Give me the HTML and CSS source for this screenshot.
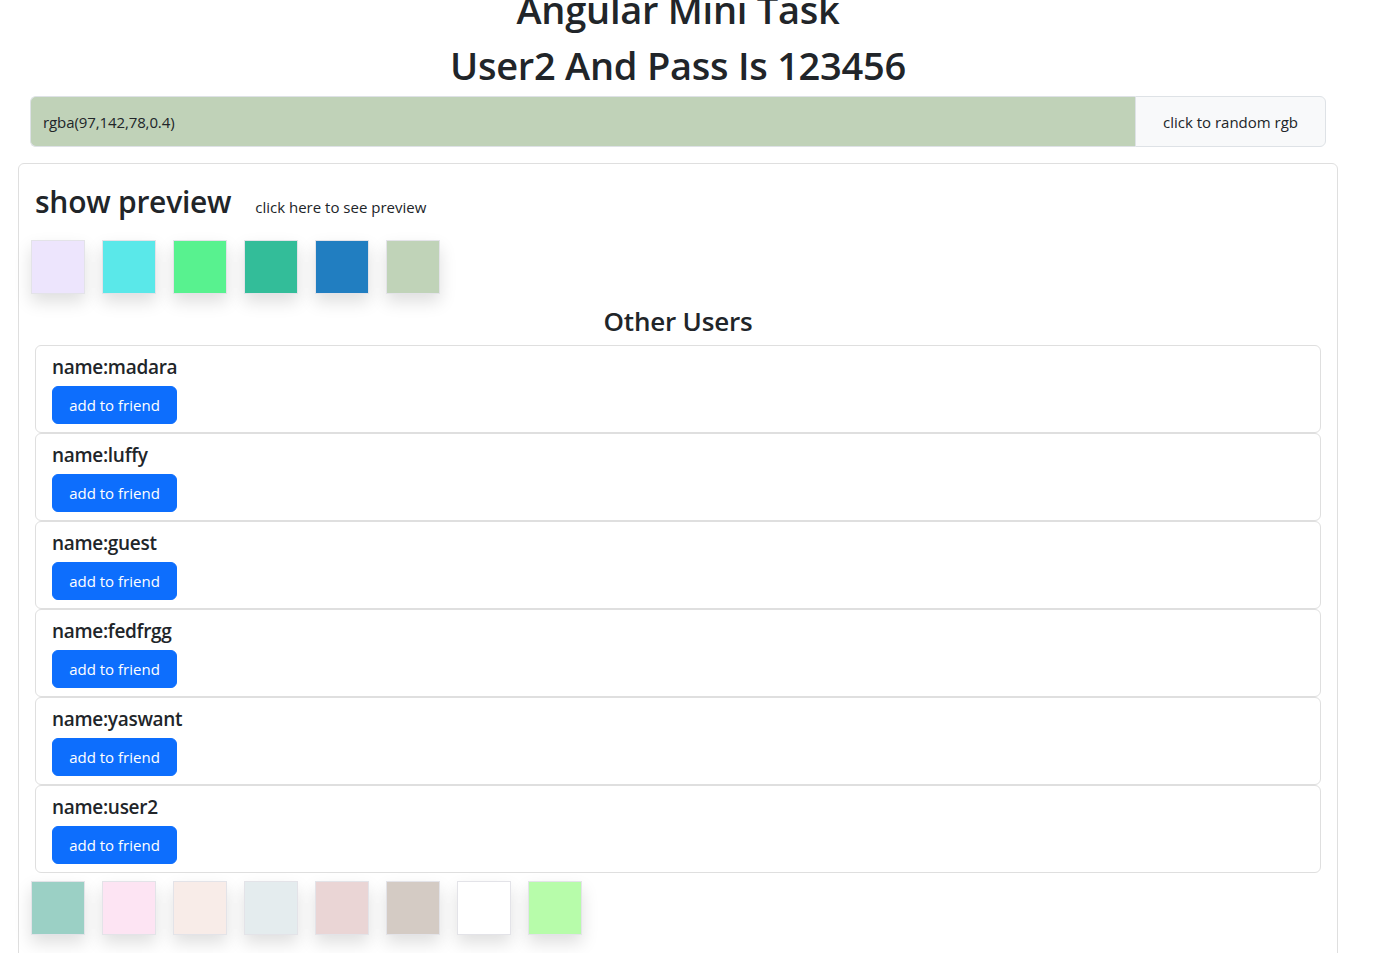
FILE: index.html
```html
<!DOCTYPE html>
<html lang="en">
<head>
<meta charset="utf-8">
<title>Angular Mini Task</title>
<link rel="stylesheet" href="styles.css">
</head>
<body>
<div class="page">
  <h1 class="title title-first">Angular Mini Task</h1>
  <h1 class="title">User2 And Pass Is 123456</h1>
  <div class="input-group">
    <div class="color-input">rgba(97,142,78,0.4)</div>
    <button class="random-btn">click to random rgb</button>
  </div>
  <div class="main-card">
    <div class="preview-head">
      <h2 class="preview-title">show preview</h2>
      <span class="preview-link">click here to see preview</span>
    </div>
    <div class="swatches swatches-top">
      <div class="swatch" style="background:#ede5fd"></div>
      <div class="swatch" style="background:#5ae8e9"></div>
      <div class="swatch" style="background:#58f28f"></div>
      <div class="swatch" style="background:#33bd99"></div>
      <div class="swatch" style="background:#217ec1"></div>
      <div class="swatch" style="background:#c0d3b8"></div>
    </div>
    <h3 class="users-title">Other Users</h3>
    <div class="users">
      <div class="user-card"><h5 class="user-name">name:madara</h5><button class="btn-primary">add to friend</button></div>
      <div class="user-card"><h5 class="user-name">name:luffy</h5><button class="btn-primary">add to friend</button></div>
      <div class="user-card"><h5 class="user-name">name:guest</h5><button class="btn-primary">add to friend</button></div>
      <div class="user-card"><h5 class="user-name">name:fedfrgg</h5><button class="btn-primary">add to friend</button></div>
      <div class="user-card"><h5 class="user-name">name:yaswant</h5><button class="btn-primary">add to friend</button></div>
      <div class="user-card"><h5 class="user-name">name:user2</h5><button class="btn-primary">add to friend</button></div>
    </div>
    <div class="swatches swatches-bottom">
      <div class="swatch" style="background:#9bd0c5"></div>
      <div class="swatch" style="background:#fde4f3"></div>
      <div class="swatch" style="background:#f8ece8"></div>
      <div class="swatch" style="background:#e4ecee"></div>
      <div class="swatch" style="background:#ead5d5"></div>
      <div class="swatch" style="background:#d4cbc4"></div>
      <div class="swatch" style="background:#ffffff"></div>
      <div class="swatch" style="background:#b7fcaa"></div>
    </div>
  </div>
</div>
</body>
</html>
```
FILE: styles.css
```css
html, body {
  margin: 0;
  padding: 0;
  background: #fff;
}
body {
  font-family: "Open Sans", "Noto Sans", "Liberation Sans", sans-serif;
  color: #212529;
  overflow: hidden;
}
.page {
  width: 1320px;
  margin-left: 18px;
}
.title {
  margin: 0 0 8px;
  font-size: 38px;
  font-weight: 600;
  line-height: 48px;
  letter-spacing: -0.25px;
  text-align: center;
}
.title-first {
  margin-top: -15px;
}
.input-group {
  display: flex;
  margin: -1px 12px 0;
  height: 51px;
}
.color-input {
  flex: 1;
  display: flex;
  align-items: center;
  padding: 0 12px;
  background: rgba(97, 142, 78, 0.4);
  border: 1px solid #dee2e6;
  border-right: none;
  border-radius: 6px 0 0 6px;
  font-size: 15px;
  letter-spacing: -0.1px;
}
.random-btn {
  width: 191px;
  background: #f8f9fa;
  border: 1px solid #dee2e6;
  border-radius: 0 6px 6px 0;
  font-family: inherit;
  font-size: 15px;
  color: #212529;
  padding: 0;
}
.main-card {
  margin-top: 16px;
  border: 1px solid #dfdfdf;
  border-radius: 6px 6px 0 0;
  padding: 18px 16px 40px;
}
.preview-head {
  display: flex;
  align-items: baseline;
  gap: 24px;
}
.preview-title {
  margin: 0;
  font-size: 30px;
  font-weight: 600;
  line-height: 40px;
  letter-spacing: -0.25px;
}
.preview-link {
  font-size: 15px;
}
.swatches {
  display: flex;
  gap: 17px;
  margin-left: -4px;
}
.swatches-top {
  margin-top: 18px;
}
.swatches-bottom {
  margin-top: 8px;
}
.swatch {
  width: 52px;
  height: 52px;
  border: 1px solid #e3e3e8;
  box-shadow: 0 8px 16px rgba(0, 0, 0, 0.13);
}
.users-title {
  margin: 10px 0 7px;
  font-size: 26px;
  font-weight: 600;
  line-height: 34px;
  letter-spacing: -0.2px;
  text-align: center;
}
.users {
  display: flex;
  flex-direction: column;
}
.user-card {
  border: 1px solid #dfdfdf;
  border-radius: 6px;
  padding: 9px 16px 8px;
}
.user-name {
  margin: 0 0 7px;
  font-size: 19px;
  font-weight: 600;
  line-height: 24px;
  letter-spacing: -0.3px;
}
.btn-primary {
  display: block;
  height: 38px;
  width: 125px;
  padding: 0;
  background: #0d6efd;
  color: #fff;
  border: 1px solid #0d6efd;
  border-radius: 6px;
  font-family: inherit;
  font-size: 15px;
}
```
